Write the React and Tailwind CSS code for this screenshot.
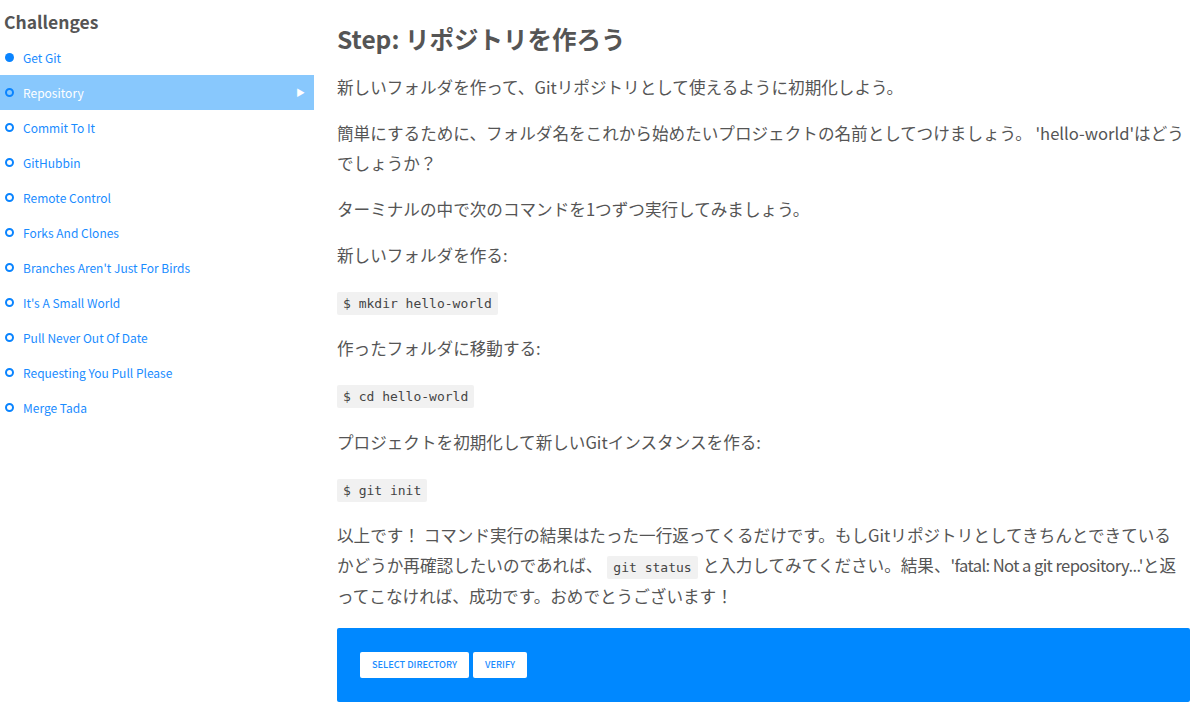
import React from "react";

const items = [
  "Get Git",
  "Repository",
  "Commit To It",
  "GitHubbin",
  "Remote Control",
  "Forks And Clones",
  "Branches Aren't Just For Birds",
  "It's A Small World",
  "Pull Never Out Of Date",
  "Requesting You Pull Please",
  "Merge Tada",
];

const font = { fontFamily: '"Noto Sans CJK JP", "Noto Sans", sans-serif' };

function Code({ children }) {
  return (
    <div className="leading-[29px]">
      <code className="bg-[#f1f1f1] px-[6px] py-[4px] rounded-[2px] text-[13px] text-[#444] font-['DejaVu_Sans_Mono',monospace]">
        {children}
      </code>
    </div>
  );
}

export default function App() {
  return (
    <div className="flex w-[1200px] h-[721px] bg-white overflow-hidden" style={font}>
      <aside className="w-[314px] shrink-0 pt-[8px]">
        <h2 className="text-[17.5px] font-bold text-[#555] pl-[4px] leading-[28px] mb-[4px]">Challenges</h2>
        <ul>
          {items.map((t, i) => {
            const active = i === 1;
            return (
              <li
                key={t}
                className={`flex items-center h-[35px] pl-[5px] pr-[9px] text-[12px] ${
                  active ? "bg-[#88c8fd] text-white" : "text-[#1a8cff]"
                }`}
              >
                <span
                  className={`w-[9px] h-[9px] rounded-full mr-[9px] shrink-0 ${
                    i === 0 ? "bg-[#0a84ff]" : "border-[2px] border-[#0a84ff]"
                  }`}
                />
                <span className="flex-1">{t}</span>
                {active && <span className="text-[9px] text-white">▶</span>}
              </li>
            );
          })}
        </ul>
      </aside>
      <main className="flex-1 pl-[23px] pr-[10px] pt-[21px] text-[16.6px] text-[#555]">
        <h1 className="text-[24.5px] font-bold leading-[36px] text-[#555] mb-[16px]">Step: リポジトリを作ろう</h1>
        <div className="flex flex-col gap-[16.5px] leading-[29.5px] pr-[6px]">
          <p>新しいフォルダを作って、Gitリポジトリとして使えるように初期化しよう。</p>
          <p>
            簡単にするために、フォルダ名をこれから始めたいプロジェクトの名前としてつけましょう。 'hello-world'はどうでしょうか？
          </p>
          <p>ターミナルの中で次のコマンドを1つずつ実行してみましょう。</p>
          <p>新しいフォルダを作る:</p>
          <Code>$ mkdir hello-world</Code>
          <p>作ったフォルダに移動する:</p>
          <Code>$ cd hello-world</Code>
          <p>プロジェクトを初期化して新しいGitインスタンスを作る:</p>
          <Code>$ git init</Code>
          <p>
            以上です！ コマンド実行の結果はたった一行返ってくるだけです。もしGitリポジトリとしてきちんとできているかどうか再確認したいのであれば、
            <code className="bg-[#f1f1f1] px-[6px] py-[4px] mx-[5px] rounded-[2px] text-[13px] text-[#444] font-['DejaVu_Sans_Mono',monospace]">
              git status
            </code>
            と入力してみてください。結果、
            <span className="tracking-[-0.6px]">'fatal: Not a git repository...'</span>
            と返ってこなければ、成功です。おめでとうございます！
          </p>
        </div>
        <div className="mt-[16px] h-[74px] bg-[#0088ff] rounded-[2px] flex items-center pl-[23px] gap-[4px]">
          <button className="bg-white rounded-[2px] h-[26px] px-[12px] text-[9.2px] font-medium text-[#1a8cff] uppercase">
            Select Directory
          </button>
          <button className="bg-white rounded-[2px] h-[26px] px-[12px] text-[9.2px] font-medium text-[#1a8cff] uppercase">
            Verify
          </button>
        </div>
      </main>
    </div>
  );
}
